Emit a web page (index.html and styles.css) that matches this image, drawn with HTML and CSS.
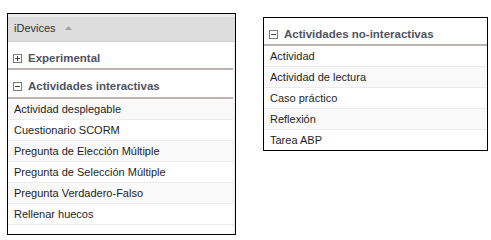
FILE: index.html
```html
<!DOCTYPE html>
<html lang="es">
<head>
<meta charset="utf-8">
<title>iDevices</title>
<link rel="stylesheet" href="styles.css">
</head>
<body>
<div class="page">
  <div class="panel panel-left">
    <div class="panel-head">
      <span>iDevices</span>
      <svg class="sort" width="7" height="4" viewBox="0 0 7 4"><polygon points="0,4 3.5,0 7,4" fill="#a3a3a3"/></svg>
    </div>
    <div class="panel-body">
      <div class="group-title">
        <svg class="toggle" width="9" height="9" viewBox="0 0 9 9"><rect x="0.5" y="0.5" width="8" height="8" fill="#fff" stroke="#7a7a7a"/><path d="M2 4.5H7M4.5 2V7" stroke="#444" stroke-width="1"/></svg>
        <span>Experimental</span>
      </div>
      <div class="group-title group-title-open">
        <svg class="toggle" width="9" height="9" viewBox="0 0 9 9"><rect x="0.5" y="0.5" width="8" height="8" fill="#fff" stroke="#7a7a7a"/><path d="M2 4.5H7" stroke="#444" stroke-width="1"/></svg>
        <span>Actividades interactivas</span>
      </div>
      <ul class="rows">
        <li class="row alt">Actividad desplegable</li>
        <li class="row">Cuestionario SCORM</li>
        <li class="row alt">Pregunta de Elección Múltiple</li>
        <li class="row">Pregunta de Selección Múltiple</li>
        <li class="row alt">Pregunta Verdadero-Falso</li>
        <li class="row">Rellenar huecos</li>
      </ul>
      <div class="filler"></div>
    </div>
  </div>

  <div class="panel panel-right">
    <div class="group-title">
      <svg class="toggle" width="9" height="9" viewBox="0 0 9 9"><rect x="0.5" y="0.5" width="8" height="8" fill="#fff" stroke="#7a7a7a"/><path d="M2 4.5H7" stroke="#444" stroke-width="1"/></svg>
      <span>Actividades no-interactivas</span>
    </div>
    <ul class="rows">
      <li class="row">Actividad</li>
      <li class="row alt">Actividad de lectura</li>
      <li class="row">Caso práctico</li>
      <li class="row alt">Reflexión</li>
      <li class="row last">Tarea ABP</li>
    </ul>
  </div>
</div>
</body>
</html>
```

FILE: styles.css
```css
html, body {
  margin: 0;
  padding: 0;
  background: #fff;
}

body {
  font-family: "Liberation Sans", Arial, sans-serif;
  font-size: 11px;
  color: #1e1e24;
}

.page {
  display: flex;
  align-items: flex-start;
  gap: 27px;
  padding: 13px 0 0 7px;
}

.panel {
  border: 1px solid #000;
  background: #fff;
}

.panel-left {
  width: 227px;
}

.panel-right {
  width: 223px;
  margin-top: 4px;
}

.panel-head {
  display: flex;
  align-items: center;
  gap: 9px;
  height: 27px;
  padding-left: 6px;
  background: linear-gradient(#ececec 0, #ececec 3px, #dddddd 3px, #dddddd 100%);
  border-bottom: 1px solid #cdcdcd;
  color: #333;
  line-height: 14px;
}

.sort {
  display: block;
  margin-top: 1px;
}

.panel-body {
  border-right: 2px solid #f1f1f1;
}

.group-title {
  display: flex;
  align-items: center;
  gap: 6px;
  padding: 9px 0 3px 5px;
  line-height: 14px;
  border-bottom: 2px solid #bdb2b2;
  font-weight: bold;
  font-size: 11.5px;
  color: #4f5360;
}

.group-title-open {
  padding-bottom: 4px;
}

.toggle {
  display: block;
  flex: none;
}

.rows {
  list-style: none;
  margin: 0;
  padding: 0;
}

.row {
  height: 20px;
  line-height: 20px;
  padding-left: 6px;
  border-bottom: 1px solid #ececec;
  background: #fff;
  white-space: nowrap;
}

.row.alt {
  background: #f9f9f9;
}

.row.last {
  border-bottom: none;
}

.filler {
  height: 9px;
}
```
